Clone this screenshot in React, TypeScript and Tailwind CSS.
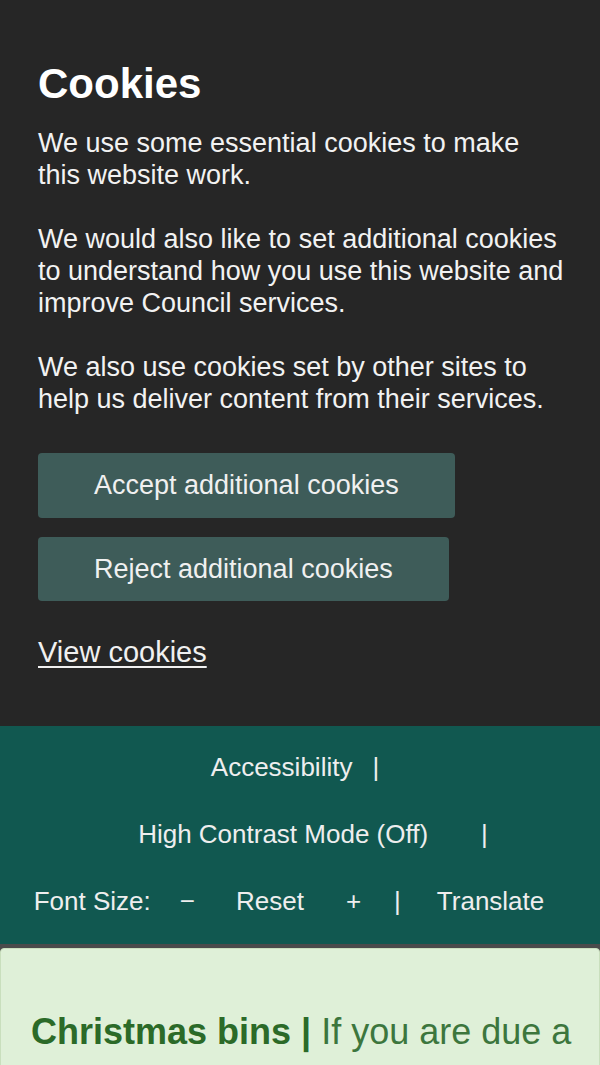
import React from "react";

export default function App() {
  const font = { fontFamily: '"Liberation Sans", Arial, sans-serif' };
  return (
    <div className="w-[600px] h-[1065px] overflow-hidden bg-[#262626]" style={font}>
      <section className="bg-[#262626] pl-[38px] pr-[16px] pt-[60px] pb-[56px] text-white">
        <h2 className="text-[42px] leading-[48px] font-bold">Cookies</h2>
        <p className="mt-[19px] text-[27px] leading-[32px] text-[#f2f2f2]">
          We use some essential cookies to make
          <br />
          this website work.
        </p>
        <p className="mt-[32px] text-[27px] leading-[32px] text-[#f2f2f2]">
          We would also like to set additional cookies
          <br />
          to understand how you use this website and
          <br />
          improve Council services.
        </p>
        <p className="mt-[32px] text-[27px] leading-[32px] text-[#f2f2f2]">
          We also use cookies set by other sites to
          <br />
          help us deliver content from their services.
        </p>
        <div className="mt-[38px] flex flex-col items-start gap-[19px]">
          <button className="h-[65px] px-[56px] rounded-[4px] bg-[#3e5c59] text-[27px] text-[#f0f0f0]">
            Accept additional cookies
          </button>
          <button className="h-[64px] px-[56px] rounded-[4px] bg-[#3e5c59] text-[27px] text-[#f0f0f0]">
            Reject additional cookies
          </button>
        </div>
        <a href="#" className="mt-[33px] inline-block text-[29px] leading-[36px] underline underline-offset-[4px] decoration-[2px] text-[#f0f0f0]">
          View cookies
        </a>
      </section>
      <nav className="bg-[#115850] pt-[8px] pb-[9px] text-[26px] text-[#eeeeee]">
        <div className="h-[67px] flex items-center justify-center pr-[10px]">
          <span>Accessibility</span>
          <span className="ml-[20px]">|</span>
        </div>
        <div className="h-[67px] flex items-center justify-center pl-[26px]">
          <span>High Contrast Mode (Off)</span>
          <span className="ml-[53px]">|</span>
        </div>
        <div className="h-[67px] flex items-center justify-center pr-[22px]">
          <span>Font Size:</span>
          <span className="ml-[29px]">−</span>
          <span className="ml-[41px]">Reset</span>
          <span className="ml-[42px]">+</span>
          <span className="ml-[33px]">|</span>
          <span className="ml-[36px]">Translate</span>
        </div>
      </nav>
      <div className="bg-[#4b4b4b] pt-[4px]">
        <div className="h-[200px] rounded-t-[4px] border border-[#c9dfbd] bg-[#dff0d8] px-[30px] pt-[63px] text-[36px] leading-[40px] text-[#3c763d] whitespace-nowrap overflow-hidden">
          <strong className="text-[#2b6a28]">Christmas bins |</strong> If you are due a
        </div>
      </div>
    </div>
  );
}
